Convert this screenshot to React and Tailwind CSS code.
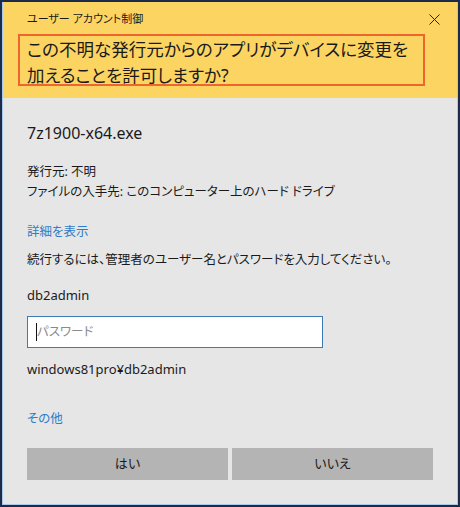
export default function App() {
  return (
    <div className="w-[460px] h-[507px] border-2 border-[#1c2b4a] bg-[#e6e6e6] font-['Noto_Sans','Noto_Sans_CJK_JP',sans-serif] [font-feature-settings:'palt'] text-[#1a1a1a]">
      <div className="h-full flex flex-col border-x border-b border-[#a9c9ea]">
        <div className="h-[96px] bg-[#fcd462] pl-[24px] pr-[16px] shrink-0">
          <div className="flex items-center justify-between h-[32px] pt-[2px]">
            <span className="text-[11px] leading-[16px]">ユーザー アカウント制御</span>
            <svg width="11" height="11" viewBox="0 0 11 11" className="mr-[1px]">
              <path d="M0.5 0.5 L10.5 10.5 M10.5 0.5 L0.5 10.5" stroke="#222" strokeWidth="1" fill="none" />
            </svg>
          </div>
          <div className="-ml-[9px] w-[407px] h-[52px] border-2 border-[#f0642d] pl-[7px] text-[17.5px] leading-[26px] whitespace-nowrap">
            この不明な発行元からのアプリがデバイスに変更を<br />
            加えることを許可しますか?
          </div>
        </div>
        <div className="flex-1 px-[24px]">
          <p className="mt-[24px] text-[16px] leading-[22px]">7z1900-x64.exe</p>
          <p className="mt-[18px] text-[12.5px] leading-[20px]">発行元: 不明</p>
          <p className="text-[12.5px] leading-[20px]">ファイルの入手先: このコンピューター上のハード ドライブ</p>
          <p className="mt-[20px] text-[12.5px] leading-[20px] text-[#2f7cc7]">詳細を表示</p>
          <p className="mt-[8px] text-[12.5px] leading-[20px]">続行するには、管理者のユーザー名とパスワードを入力してください。</p>
          <p className="mt-[15px] text-[13px] leading-[20px]">db2admin</p>
          <div className="mt-[11px] w-[296px] h-[32px] bg-white border border-[#3c7ab8] flex items-center pl-[8px]">
            <span className="w-px h-[18px] bg-[#111]" />
            <span className="text-[12.5px] text-[#8a8a8a]">パスワード</span>
          </div>
          <p className="mt-[11px] text-[13px] leading-[20px]">windows81pro¥db2admin</p>
          <p className="mt-[30px] text-[12.5px] leading-[20px] text-[#2f7cc7]">その他</p>
          <div className="mt-[19px] flex gap-[4px]">
            <button className="w-[201px] h-[32px] bg-[#b4b4b4] text-[13px]">はい</button>
            <button className="w-[201px] h-[32px] bg-[#b4b4b4] text-[13px]">いいえ</button>
          </div>
        </div>
      </div>
    </div>
  );
}
